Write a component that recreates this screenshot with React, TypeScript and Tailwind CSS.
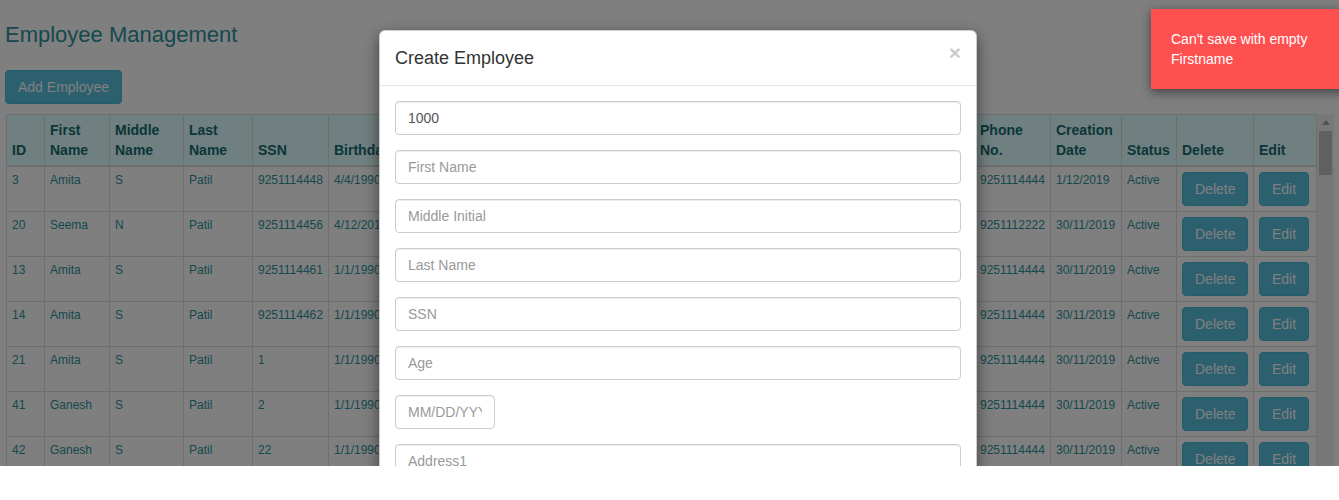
import React from "react";

const cols = [38, 65, 74, 69, 76, 78, 44, 120, 120, 90, 90, 104, 76, 71, 55, 77, 63];
const headers = [
  "ID",
  "First Name",
  "Middle Name",
  "Last Name",
  "SSN",
  "Birthday",
  "Age",
  "Address1",
  "Address2",
  "City",
  "State",
  "Zip",
  "Phone No.",
  "Creation Date",
  "Status",
  "Delete",
  "Edit",
];

const rows = [
  ["3", "Amita", "S", "Patil", "9251114448", "4/4/1990", "29", "Pune", "MH", "Pune", "MH", "411001", "9251114444", "1/12/2019"],
  ["20", "Seema", "N", "Patil", "9251114456", "4/12/2019", "0", "Pune", "MH", "Pune", "MH", "411001", "9251112222", "30/11/2019"],
  ["13", "Amita", "S", "Patil", "9251114461", "1/1/1990", "29", "Pune", "MH", "Pune", "MH", "411001", "9251114444", "30/11/2019"],
  ["14", "Amita", "S", "Patil", "9251114462", "1/1/1990", "29", "Pune", "MH", "Pune", "MH", "411001", "9251114444", "30/11/2019"],
  ["21", "Amita", "S", "Patil", "1", "1/1/1990", "29", "Pune", "MH", "Pune", "MH", "411001", "9251114444", "30/11/2019"],
  ["41", "Ganesh", "S", "Patil", "2", "1/1/1990", "29", "Pune", "MH", "Pune", "MH", "411001", "9251114444", "30/11/2019"],
  ["42", "Ganesh", "S", "Patil", "22", "1/1/1990", "29", "Pune", "MH", "Pune", "MH", "411001", "9251114444", "30/11/2019"],
];

const btn =
  "rounded-[4px] border border-[#46b8da] bg-[#5bc0de] px-3 py-[6px] text-[14px] leading-[20px] text-white";

const inputCls =
  "block h-[34px] rounded-[4px] border border-[#ccc] px-3 py-[6px] text-[14px] leading-[20px] text-[#555] placeholder:text-[#999] shadow-[inset_0_1px_1px_rgba(0,0,0,0.075)] outline-none";

export default function App() {
  return (
    <div className="relative h-[466px] w-[1339px] overflow-hidden bg-white font-['Liberation_Sans',Arial,sans-serif]">
      {/* Page */}
      <div className="px-[5px]">
        <h3 className="pt-[22px] text-[22px] leading-[26px] font-normal text-[#2a939c]">
          Employee Management
        </h3>
        <div className="mt-[22px]">
          <button className={btn}>Add Employee</button>
        </div>
        <div className="mt-[10px] flex h-[352px]">
          <div className="w-[1312px] overflow-hidden pl-px">
            <table className="w-[1310px] table-fixed border-collapse">
              <colgroup>
                {cols.map((w, i) => (
                  <col key={i} style={{ width: w }} />
                ))}
              </colgroup>
              <thead>
                <tr className="bg-[#e0ffff]">
                  {headers.map((h) => (
                    <th
                      key={h}
                      className="border border-b-2 border-[#ddd] p-[5px] text-left align-bottom text-[14px] leading-[20px] font-bold text-[#166c73]"
                    >
                      {h}
                    </th>
                  ))}
                </tr>
              </thead>
              <tbody>
                {rows.map((r, ri) => (
                  <tr key={ri}>
                    {r.map((c, ci) => (
                      <td
                        key={ci}
                        className="overflow-hidden whitespace-nowrap border border-[#ddd] p-[5px] align-top text-[12px] leading-[17px] text-[#2a939c]"
                      >
                        {c}
                      </td>
                    ))}
                    <td className="border border-[#ddd] p-[5px] align-top text-[12px] leading-[17px] text-[#2a939c]">
                      Active
                    </td>
                    <td className="border border-[#ddd] p-[5px] align-top">
                      <button className={btn}>Delete</button>
                    </td>
                    <td className="border border-[#ddd] p-[5px] align-top">
                      <button className={btn}>Edit</button>
                    </td>
                  </tr>
                ))}
              </tbody>
            </table>
          </div>
          {/* scrollbar */}
          <div className="flex w-[17px] flex-col items-center bg-[#f1f1f1]">
            <div className="flex h-[17px] items-center justify-center">
              <svg width="8" height="5" viewBox="0 0 8 5">
                <path d="M0 5 L4 0 L8 5 Z" fill="#a3a3a3" />
              </svg>
            </div>
            <div className="h-[44px] w-[13px] bg-[#c1c1c1]" />
          </div>
        </div>
      </div>

      {/* Backdrop */}
      <div className="absolute inset-0 bg-black/50" />

      {/* Modal */}
      <div className="absolute left-[379px] top-[30px] w-[598px] rounded-[6px] border border-black/20 bg-white shadow-[0_5px_15px_rgba(0,0,0,0.5)]">
        <div className="flex items-start justify-between border-b border-[#e5e5e5] px-[15px] pt-[15px] pb-[14px]">
          <h4 className="text-[18px] leading-[25px] font-normal text-[#333]">Create Employee</h4>
          <span className="-mt-[4px] text-[21px] leading-none font-bold text-black opacity-20">×</span>
        </div>
        <div className="flex flex-col gap-[15px] p-[15px]">
          <input className={`${inputCls} w-full`} defaultValue="1000" readOnly />
          <input className={`${inputCls} w-full`} placeholder="First Name" />
          <input className={`${inputCls} w-full`} placeholder="Middle Initial" />
          <input className={`${inputCls} w-full`} placeholder="Last Name" />
          <input className={`${inputCls} w-full`} placeholder="SSN" />
          <input className={`${inputCls} w-full`} placeholder="Age" />
          <input className={`${inputCls} w-[100px]`} placeholder="MM/DD/YYYY" />
          <input className={`${inputCls} w-full`} placeholder="Address1" />
          <input className={`${inputCls} w-full`} placeholder="Address2" />
        </div>
      </div>

      {/* Toast */}
      <div className="absolute left-[1151px] top-[9px] w-[220px] bg-[#ff5050] p-5 text-[14px] leading-[20px] text-white shadow-[0_3px_10px_rgba(0,0,0,0.5)]">
        Can't save with empty Firstname
      </div>
    </div>
  );
}
